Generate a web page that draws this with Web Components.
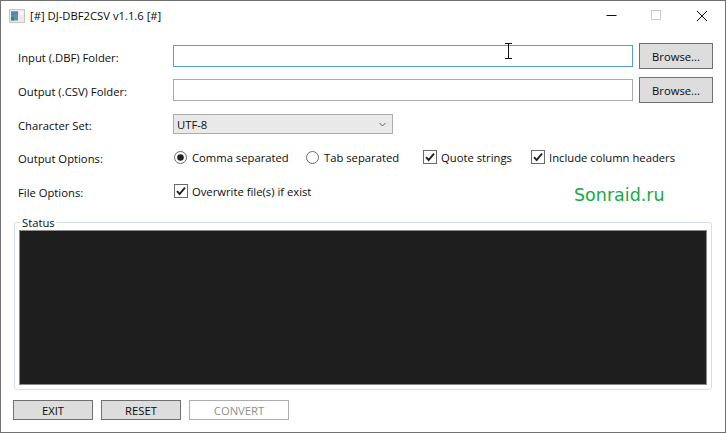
<!DOCTYPE html>
<html><head><meta charset="utf-8"><style>
html,body{margin:0;padding:0;background:#fff}
body{font:12px "Open Sans",sans-serif;color:#111}
</style></head><body>
<dj-window>
  <dj-titlebar>[#] DJ-DBF2CSV v1.1.6 [#]</dj-titlebar>
  <dj-row label="Input (.DBF) Folder:" style="--mt:13px"><dj-text focused></dj-text><dj-button browse>Browse...</dj-button></dj-row>
  <dj-row label="Output (.CSV) Folder:" style="--mt:8px"><dj-text></dj-text><dj-button browse>Browse...</dj-button></dj-row>
  <dj-row label="Character Set:" style="--mt:11px;--h:20px"><dj-combo>UTF-8</dj-combo></dj-row>
  <dj-row label="Output Options:" style="--mt:15px;--h:16px">
    <dj-options>
      <dj-radio checked>Comma separated</dj-radio>
      <dj-radio>Tab separated</dj-radio>
      <dj-check>Quote strings</dj-check>
      <dj-check>Include column headers</dj-check>
    </dj-options>
  </dj-row>
  <dj-row label="File Options:" style="--mt:18px;--h:16px">
    <dj-options><dj-check>Overwrite file(s) if exist</dj-check><span></span><dj-brand>Sonraid.ru</dj-brand></dj-options>
  </dj-row>
  <dj-group legend="Status"></dj-group>
  <dj-actions>
    <dj-button style="--w:80px">EXIT</dj-button>
    <dj-button style="--w:80px">RESET</dj-button>
    <dj-button style="--w:100px" disabled>CONVERT</dj-button>
  </dj-actions>
  <dj-cursor></dj-cursor>
</dj-window>
<script>
const FONT='"Open Sans",sans-serif';
function def(name,html){
  customElements.define(name,class extends HTMLElement{
    constructor(){super();const r=this.attachShadow({mode:'open'});r.innerHTML=typeof html==='function'?html(this):html;}
  });
}
def('dj-window',`<style>:host{display:flex;flex-direction:column;position:relative;box-sizing:border-box;width:726px;height:433px;border:1px solid #707070;background:#fff;overflow:hidden;font-family:${FONT};font-size:11.25px;color:#0c0c0c}</style><slot></slot>`);
def('dj-titlebar',`<style>
:host{display:flex;align-items:center;height:29px;flex:none}
svg{display:block}
.ic{margin-left:8px;flex:none}
.t{margin-left:5px;flex:1;font-size:11.25px;color:#0a0a0a;padding-bottom:1px;white-space:nowrap}
.b{width:45px;height:29px;display:flex;align-items:center;justify-content:center;flex:none}
</style>
<svg class="ic" width="16" height="14" viewBox="0 0 16 14"><rect x=".5" y=".5" width="15" height="13" fill="#ececec" stroke="#c6c6c6"/><rect x="2" y="2.5" width="7" height="9" fill="#5b93a0"/><rect x="2" y="2.5" width="7" height="3" fill="#5f7fa8"/><rect x="2" y="8" width="3" height="3.5" fill="#3b8a62"/><rect x="11" y="3" width="3" height="3" fill="#fff"/></svg>
<span class="t"><slot></slot></span>
<span class="b"><svg width="11" height="11" viewBox="0 0 11 11"><path d="M.5 5.5H10.5" stroke="#111"/></svg></span>
<span class="b"><svg width="11" height="11" viewBox="0 0 11 11"><rect x=".5" y=".5" width="9" height="9" fill="none" stroke="#ccc"/></svg></span>
<span class="b" style="margin-right:1px"><svg width="12" height="12" viewBox="0 0 12 12"><path d="M1 1L11 11M11 1L1 11" stroke="#111" fill="none"/></svg></span>`);
def('dj-row',el=>`<style>
:host{display:grid;grid-template-columns:149px 460px 74px;column-gap:6px;flex:none;align-items:center;height:var(--h,26px);margin-top:var(--mt,0);padding-left:17px}
.l{white-space:nowrap;transform:translateY(1px)}
::slotted(dj-combo),::slotted(dj-options){grid-column:2 / 4}
</style><span class="l">${el.getAttribute('label')}</span><slot></slot>`);
def('dj-text',`<style>:host{display:block;box-sizing:border-box;height:22px;border:1px solid #ababab;background:#fff}:host([focused]){border-color:#569de5}</style>`);
def('dj-button',`<style>
:host{display:flex;align-items:center;justify-content:center;box-sizing:border-box;width:var(--w,74px);height:20px;border:1px solid #707070;background:#ddd;color:#0c0c0c;font-size:11.25px;white-space:nowrap}
:host([browse]){height:26px}
:host([disabled]){background:#fff;border-color:#adadad;color:#8f8f8f}
</style><slot></slot>`);
def('dj-combo',`<style>
:host{display:flex;align-items:center;justify-content:space-between;box-sizing:border-box;width:220px;height:20px;border:1px solid #acacac;background:#e9e9e9;padding:0 6px 0 3px;color:#0c0c0c}
svg{display:block}
</style><slot></slot><svg width="7" height="5" viewBox="0 0 7 5"><path d="M.5 1L3.5 4L6.5 1" fill="none" stroke="#606060"/></svg>`);
def('dj-options',`<style>:host{display:grid;grid-template-columns:132px 117px 108px 1fr;margin-left:1px;align-items:center;height:16px}</style><slot></slot>`);
def('dj-radio',el=>`<style>:host{display:flex;align-items:center;gap:5px;white-space:nowrap}svg{display:block;flex:none}</style>
<svg width="13" height="13" viewBox="0 0 13 13"><circle cx="6.5" cy="6.5" r="6" fill="#fff" stroke="#6a6a6a"/>${el.hasAttribute('checked')?'<circle cx="6.5" cy="6.5" r="3.3" fill="#222"/>':''}</svg><slot></slot>`);
def('dj-check',`<style>:host{display:flex;align-items:center;gap:4px;white-space:nowrap}svg{display:block;flex:none}</style>
<svg width="14" height="14" viewBox="0 0 14 14"><rect x=".5" y=".5" width="13" height="13" fill="#fff" stroke="#6a6a6a"/><path d="M3 7.2L5.6 10L11 3.6" fill="none" stroke="#222" stroke-width="1.9"/></svg><slot></slot>`);
def('dj-brand',`<style>:host{display:block;justify-self:start;height:16px;margin-left:151px;font-size:17.5px;color:#16a844;line-height:16px;white-space:nowrap;transform:translateY(4px);font-family:"DejaVu Sans",sans-serif}</style><slot></slot>`);
def('dj-group',el=>`<style>
:host{display:block;flex:none;position:relative;box-sizing:border-box;width:698px;height:168px;margin:23px 0 0 13px;border:1px solid #d5dfe5;border-radius:3px;padding:7px 4px 4px 4px}
.lg{position:absolute;left:5px;top:-7px;background:#fff;padding:0 2px;line-height:13px;font-size:11.25px;white-space:nowrap}
.con{box-sizing:border-box;height:155px;background:#1e1e1e;border:1px solid #8a8a8a}
</style><span class="lg">${el.getAttribute('legend')}</span><div class="con"></div>`);
def('dj-actions',`<style>:host{display:flex;flex:none;gap:8px;margin:10px 0 0 12px}</style><slot></slot>`);
def('dj-cursor',`<style>:host{position:absolute;left:503px;top:42px;width:9px;height:16px}svg{display:block}</style>
<svg width="9" height="16" viewBox="0 0 9 16"><path d="M1 .5H8M1 15.5H8M4.5 .5V15.5" stroke="#111" fill="none"/></svg>`);
</script>
</body></html>
